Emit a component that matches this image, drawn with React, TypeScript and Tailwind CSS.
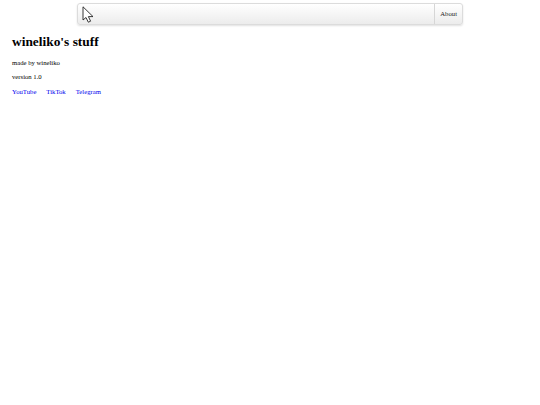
export default function App() {
  return (
    <div className="min-h-[405px] bg-white font-['Liberation_Serif',serif] text-black">
      <div className="flex justify-center pt-[3px]">
        <nav className="flex h-[22px] w-[386px] items-stretch rounded-[3px] border border-[#dcdcdc] bg-gradient-to-b from-white to-[#ececec] shadow-[0_1px_2px_rgba(0,0,0,0.12)]">
          <div className="flex flex-1 items-center pl-[4px]">
            <svg width="13" height="17" viewBox="0 0 13 17">
              <path
                d="M1 0.8 L1 14 L4 11.5 L6.3 16.2 L8.6 15.2 L6.4 10.6 L11 10.6 Z"
                fill="white"
                stroke="#222"
                strokeWidth="0.9"
                strokeLinejoin="round"
              />
            </svg>
          </div>
          <div className="flex items-center border-l border-[#d6d6d6] px-[5px] text-[6.7px] text-[#222]">
            About
          </div>
        </nav>
      </div>
      <main className="px-[12px] pt-[9px]">
        <h1 className="text-[13.4px] font-bold leading-[16px]">wineliko's stuff</h1>
        <p className="mt-[9px] text-[6.7px] leading-[8px]">made by wineliko</p>
        <p className="mt-[6px] text-[6.7px] leading-[8px]">version 1.0</p>
        <div className="mt-[7px] flex gap-[10px] text-[6.7px] leading-[8px] text-[#0000ee]">
          <a href="#">YouTube</a>
          <a href="#">TikTok</a>
          <a href="#">Telegram</a>
        </div>
      </main>
    </div>
  )
}
